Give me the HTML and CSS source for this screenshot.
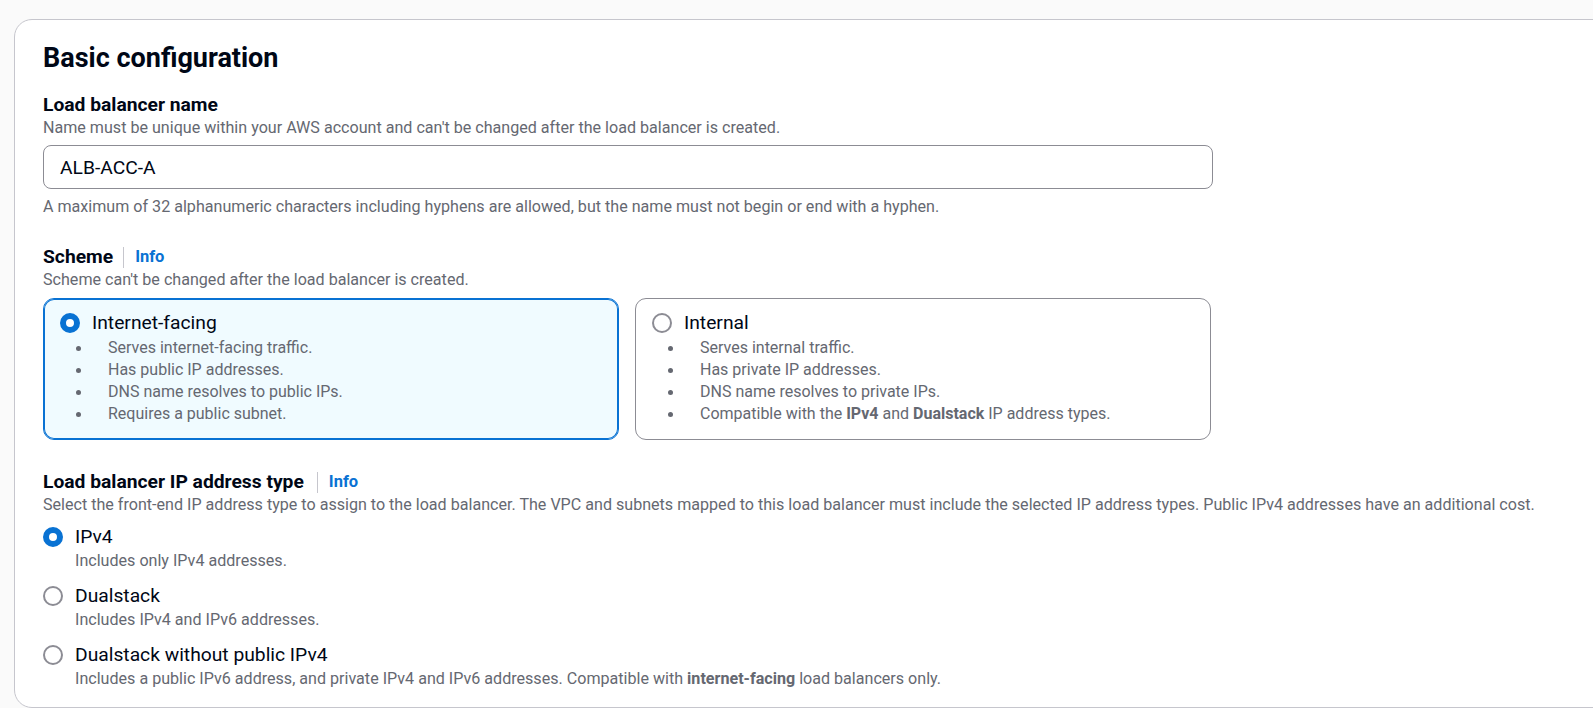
FILE: index.html
```html
<!DOCTYPE html>
<html lang="en">
<head>
<meta charset="utf-8">
<title>Basic configuration</title>
<link rel="stylesheet" href="styles.css">
</head>
<body>
<div class="page">
  <section class="card">
    <h2 class="card-title">Basic configuration</h2>

    <div class="field">
      <div class="label-row"><span class="label">Load balancer name</span></div>
      <div class="desc">Name must be unique within your AWS account and can't be changed after the load balancer is created.</div>
      <div class="input">ALB-ACC-A</div>
      <div class="desc constraint">A maximum of 32 alphanumeric characters including hyphens are allowed, but the name must not begin or end with a hyphen.</div>
    </div>

    <div class="field scheme">
      <div class="label-row"><span class="label">Scheme</span><span class="divider"></span><a class="info">Info</a></div>
      <div class="desc">Scheme can't be changed after the load balancer is created.</div>
      <div class="tiles">
        <div class="tile selected">
          <div class="tile-head"><span class="radio checked"></span><span class="tile-title">Internet-facing</span></div>
          <ul class="bullets">
            <li><span>Serves internet-facing traffic.</span></li>
            <li><span>Has public IP addresses.</span></li>
            <li><span>DNS name resolves to public IPs.</span></li>
            <li><span>Requires a public subnet.</span></li>
          </ul>
        </div>
        <div class="tile">
          <div class="tile-head"><span class="radio"></span><span class="tile-title">Internal</span></div>
          <ul class="bullets">
            <li><span>Serves internal traffic.</span></li>
            <li><span>Has private IP addresses.</span></li>
            <li><span>DNS name resolves to private IPs.</span></li>
            <li><span>Compatible with the <b>IPv4</b> and <b>Dualstack</b> IP address types.</span></li>
          </ul>
        </div>
      </div>
    </div>

    <div class="field iptype">
      <div class="label-row"><span class="label">Load balancer IP address type</span><span class="divider"></span><a class="info">Info</a></div>
      <div class="desc">Select the front-end IP address type to assign to the load balancer. The VPC and subnets mapped to this load balancer must include the selected IP address types. Public IPv4 addresses have an additional cost.</div>
      <div class="options">
        <div class="option">
          <span class="radio checked"></span>
          <div class="option-text">
            <div class="option-title">IPv4</div>
            <div class="desc">Includes only IPv4 addresses.</div>
          </div>
        </div>
        <div class="option">
          <span class="radio"></span>
          <div class="option-text">
            <div class="option-title">Dualstack</div>
            <div class="desc">Includes IPv4 and IPv6 addresses.</div>
          </div>
        </div>
        <div class="option">
          <span class="radio"></span>
          <div class="option-text">
            <div class="option-title">Dualstack without public IPv4</div>
            <div class="desc">Includes a public IPv6 address, and private IPv4 and IPv6 addresses. Compatible with <b>internet-facing</b> load balancers only.</div>
          </div>
        </div>
      </div>
    </div>
  </section>
</div>
</body>
</html>
```

FILE: styles.css
```css
html, body {
  margin: 0;
  padding: 0;
  overflow: hidden;
  background: #fafafa;
}
body {
  font-family: Roboto, "Liberation Sans", sans-serif;
  color: #000716;
}
.page {
  padding: 19px 0 0 14px;
}
.card {
  box-sizing: border-box;
  width: 1640px;
  height: 689px;
  background: #ffffff;
  border: 1px solid #c6c6cd;
  border-radius: 18px;
  padding: 21px 28px 0 28px;
}
.card-title {
  margin: 0;
  font-size: 27px;
  line-height: 34px;
  font-weight: 700;
  color: #000716;
}
.field {
  margin-top: 18px;
}
.label-row {
  display: flex;
  align-items: center;
  height: 24px;
}
.label {
  font-size: 19.25px;
  font-weight: 700;
  line-height: 24px;
}
.divider {
  width: 1px;
  height: 21px;
  background: #c6c6cd;
  margin: 0 11px 0 10px;
}
.iptype .divider {
  margin: 0 11px 0 13px;
}
.info {
  font-size: 16.5px;
  font-weight: 700;
  color: #0972d3;
  line-height: 24px;
  cursor: pointer;
}
.desc {
  font-size: 16.1px;
  line-height: 22px;
  color: #656871;
}
.desc b {
  font-weight: 700;
}
.input {
  box-sizing: border-box;
  margin-top: 6px;
  width: 1170px;
  height: 44px;
  border: 1px solid #8c8c94;
  border-radius: 8px;
  padding: 0 16px;
  display: flex;
  align-items: center;
  font-size: 19.25px;
  color: #000716;
}
.constraint {
  margin-top: 7px;
}
.scheme {
  margin-top: 27px;
}
.tiles {
  margin-top: 7px;
  display: grid;
  grid-template-columns: 576px 576px;
  column-gap: 16px;
}
.tile {
  box-sizing: border-box;
  height: 142px;
  border: 1px solid #8c8c94;
  border-radius: 11px;
  padding: 11px 16px 0 16px;
  background: #ffffff;
}
.tile.selected {
  border-color: #0972d3;
  box-shadow: inset 0 0 0 1px #0972d3;
  background: #f0fbff;
}
.tile-head {
  display: flex;
  align-items: center;
  height: 25px;
}
.tile-title {
  font-size: 19.25px;
  line-height: 25px;
  margin-left: 12px;
  color: #000716;
}
.radio {
  box-sizing: border-box;
  flex: none;
  width: 20px;
  height: 20px;
  border-radius: 50%;
  border: 2px solid #8c8c94;
  background: #ffffff;
}
.radio.checked {
  border: 6px solid #0972d3;
}
.bullets {
  list-style: none;
  margin: 2px 0 0 0;
  padding: 0;
}
.bullets li {
  display: flex;
  align-items: center;
  font-size: 16px;
  line-height: 22px;
  color: #656871;
}
.bullets li::before {
  content: "";
  flex: none;
  width: 5px;
  height: 5px;
  border-radius: 50%;
  background: #656871;
  margin: 0 27px 0 16px;
}
.bullets li b {
  font-weight: 700;
}
.iptype {
  margin-top: 30px;
}
.options {
  margin-top: 9px;
  display: flex;
  flex-direction: column;
  row-gap: 12px;
}
.option {
  display: flex;
  align-items: flex-start;
}
.option .radio {
  margin-top: 2px;
}
.option-text {
  margin-left: 12px;
}
.option-title {
  font-size: 19.25px;
  line-height: 24px;
  margin-bottom: 1px;
  color: #000716;
}
```
